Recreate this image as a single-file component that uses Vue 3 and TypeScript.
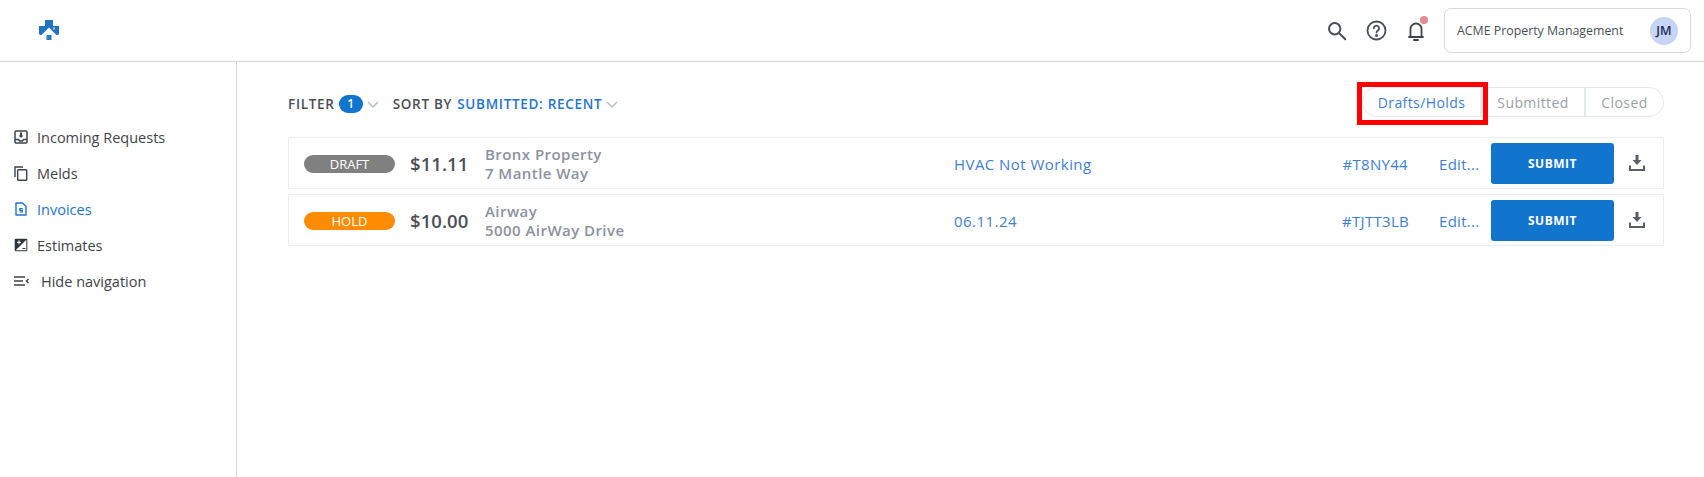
<script setup lang="ts">
interface Row { status: string; cls: string; price: string; name: string; addr: string; title: string; code: string }
const rows: Row[] = [
  { status: 'DRAFT', cls: 'draft', price: '$11.11', name: 'Bronx Property', addr: '7 Mantle Way', title: 'HVAC Not Working', code: '#T8NY44' },
  { status: 'HOLD', cls: 'hold', price: '$10.00', name: 'Airway', addr: '5000 AirWay Drive', title: '06.11.24', code: '#TJTT3LB' },
]
</script>

<template>
  <div class="page">
    <header class="top">
      <svg class="logo" width="20" height="20" viewBox="0 0 20 20">
        <path fill="#1f75c4" d="M6 0h8v6h6v8l-1 1h-1.500L10 7.500 2.500 15H1l-1-1V6h6z" />
        <rect x="7.500" y="15" width="5" height="5" fill="#2a7cc8" />
        <rect x="14" y="7.500" width="2" height="2" fill="#a9cbe9" />
      </svg>
      <div class="top-right">
        <svg class="ic search" width="20" height="20" viewBox="0 0 20 20" fill="none" stroke="#4a4f57" stroke-width="2">
          <circle cx="7.700" cy="7.700" r="5.700" /><path d="M12 12l6.300 6.300" stroke-linecap="round" />
        </svg>
        <svg class="ic help" width="21" height="21" viewBox="0 0 21 21" fill="none" stroke="#4a4f57" stroke-width="1.800">
          <circle cx="10.500" cy="10.500" r="9" />
          <path d="M7.900 8.300a2.600 2.600 0 1 1 4 2.200c-.9.600-1.400 1-1.400 2.100" stroke-linecap="round" />
          <circle cx="10.500" cy="15.400" r=".6" fill="#4a4f57" />
        </svg>
        <div class="bell">
          <svg width="18" height="22" viewBox="0 0 18 22" fill="none" stroke="#3f444c" stroke-width="1.800">
            <path d="M3.500 16V9a5.500 5.500 0 0 1 11 0v7l1.500 1H2z" stroke-linejoin="round" />
            <path d="M7 20h4" stroke-width="2" stroke-linecap="round" />
          </svg>
          <span class="dot"></span>
        </div>
        <div class="account">
          <span class="acct-name">ACME Property Management</span>
          <span class="avatar">JM</span>
        </div>
      </div>
    </header>
    <div class="body">
      <nav class="side">
        <a class="nav-item">
          <svg width="14" height="14" viewBox="0 0 14 14" fill="none" stroke="#3f444c" stroke-width="1.500">
            <rect x="1" y="1" width="12" height="12" rx="1" />
            <path d="M1 9.500h3.500l1 1.500h3l1-1.500H13" />
            <path d="M7 2.500V7" stroke-width="2" />
            <path d="M4.500 5.500h5L7 8z" fill="#3f444c" stroke="none" />
          </svg>
          <span>Incoming Requests</span>
        </a>
        <a class="nav-item">
          <svg width="14" height="15" viewBox="0 0 14 15" fill="none" stroke="#3f444c" stroke-width="1.400">
            <path d="M1 11V1h8" />
            <rect x="3.700" y="3.700" width="9" height="10.600" rx=".8" />
          </svg>
          <span>Melds</span>
        </a>
        <a class="nav-item active">
          <svg width="12" height="14" viewBox="0 0 12 14" fill="none" stroke="#1f75cf" stroke-width="1.400">
            <path d="M1 1h6.500L11 4.500V13H1z" stroke-linejoin="round" />
            <path d="M7.700 6.600H4.800v1.700h2.600V10H4.400" stroke-width="1.200" />
          </svg>
          <span>Invoices</span>
        </a>
        <a class="nav-item">
          <svg width="14" height="14" viewBox="0 0 14 14">
            <rect x=".7" y=".7" width="12.600" height="12.600" rx="1" fill="#2f343b" />
            <path d="M12.300 1.700v10.600H1.700z" fill="#fff" />
            <path d="M3 4.300h4M5 2.300v4" stroke="#fff" stroke-width="1" />
            <path d="M8.500 10.500h3" stroke="#2f343b" stroke-width="1" />
          </svg>
          <span>Estimates</span>
        </a>
        <a class="nav-item hide">
          <svg width="15" height="10" viewBox="0 0 15 10" fill="none" stroke="#3f444c" stroke-width="1.500">
            <path d="M0 1h11M0 5h9M0 9h11" />
            <path d="M14.500 3L12.500 5l2 2" />
          </svg>
          <span>Hide navigation</span>
        </a>
      </nav>
      <main class="main">
        <div class="toolbar">
          <div class="sorts">
            <span class="lbl">FILTER</span>
            <span class="pill">1</span>
            <svg class="chev" width="12" height="7" viewBox="0 0 12 7" fill="none" stroke="#b4bac6" stroke-width="1.400"><path d="M1 1l5 5 5-5" /></svg>
            <span class="lbl sort">SORT BY</span>
            <span class="lbl link">SUBMITTED: RECENT</span>
            <svg class="chev" width="12" height="7" viewBox="0 0 12 7" fill="none" stroke="#b4bac6" stroke-width="1.400"><path d="M1 1l5 5 5-5" /></svg>
          </div>
          <div class="tabs">
            <span class="tab t1 on">Drafts/Holds</span>
            <span class="tab t2">Submitted</span>
            <span class="tab t3">Closed</span>
            <span class="redbox"></span>
          </div>
        </div>
        <div class="rows">
          <div v-for="r in rows" :key="r.code" class="row">
            <span class="badge" :class="r.cls">{{ r.status }}</span>
            <span class="price">{{ r.price }}</span>
            <div class="prop"><div>{{ r.name }}</div><div>{{ r.addr }}</div></div>
            <a class="title">{{ r.title }}</a>
            <a class="code">{{ r.code }}</a>
            <a class="edit">Edit...</a>
            <button class="submit">SUBMIT</button>
            <svg class="dl" width="16" height="16" viewBox="0 0 16 16">
              <path fill="#5a5f6b" d="M6.500 0h3v5h3L8 10 3.500 5h3z" />
              <path fill="none" stroke="#5a5f6b" stroke-width="2" d="M1 10.500V15h14v-4.500" />
            </svg>
          </div>
        </div>
      </main>
    </div>
  </div>
</template>

<style>
html, body { margin: 0; background: #fff; }
</style>

<style scoped>
.page { height: 477px; overflow: hidden; font-family: "Open Sans", "Noto Sans", sans-serif; color: #3f444c; display: flex; flex-direction: column; }
.top { height: 61px; box-sizing: content-box; border-bottom: 1px solid #d3d6db; display: flex; align-items: center; justify-content: space-between; padding: 0 13px 0 39px; }
.logo { margin-top: -1px; }
.top-right { display: flex; align-items: center; }
.ic.search { margin-right: 20px; margin-left: -1px; }
.ic.help { margin-right: 20px; margin-left: -1px; }
.bell { position: relative; width: 18px; height: 22px; margin-right: 19px; }
.dot { position: absolute; top: -4px; right: -3px; width: 8px; height: 8px; border-radius: 50%; background: #e58a8a; }
.account { width: 247px; height: 45px; box-sizing: border-box; border: 1px solid #d5d9e3; border-radius: 7px; display: flex; align-items: center; justify-content: space-between; padding: 0 12px 0 12px; }
.acct-name { font-size: 12.350px; color: #4a4f57; }
.avatar { width: 28px; height: 28px; border-radius: 50%; background: #c5d5f3; color: #1e2a5a; font-size: 12.500px; font-weight: 600; display: flex; align-items: center; justify-content: center; }
.body { flex: 1; display: flex; }
.side { width: 236px; box-sizing: content-box; border-right: 1px solid #d3d6db; padding-top: 57px; display: flex; flex-direction: column; }
.nav-item { height: 36px; display: flex; align-items: center; padding-left: 14px; font-size: 14.500px; color: #3f444c; }
.nav-item svg { width: 14px; margin-right: 9px; flex: none; }
.nav-item.active { color: #1f75cf; }
.nav-item.hide svg { width: 15px; margin-right: 12px; }
.main { flex: 1; padding: 25px 40px 0 51px; }
.toolbar { height: 30px; display: flex; align-items: center; justify-content: space-between; margin-bottom: 20px; }
.sorts { display: flex; align-items: center; margin-top: 3px; }
.lbl { font-size: 13.500px; font-weight: 600; letter-spacing: .7px; color: #4a4f57; }
.link { color: #1f75cf; margin-left: 5px; }
.sort { margin-left: 14px; }
.pill { width: 24px; height: 18px; margin-left: 4px; border-radius: 9px; background: #1174cd; color: #fff; font-size: 12px; font-weight: 600; display: flex; align-items: center; justify-content: center; }
.chev { margin-left: 4px; margin-top: 1px; }
.tabs { position: relative; display: flex; height: 30px; box-sizing: border-box; border: 1px solid #e6e8f0; border-radius: 15px; font-size: 14px; letter-spacing: .4px; }
.tab { display: flex; align-items: center; justify-content: center; color: #9a9fa8; box-sizing: border-box; }
.t1 { width: 119px; border-right: 2px solid #e6e8f0; }
.t2 { width: 104px; border-right: 2px solid #e6e8f0; }
.t3 { width: 77px; }
.on { color: #3f7fd0; }
.redbox { position: absolute; left: -6px; top: -6px; width: 131px; height: 43px; box-sizing: border-box; border: 5px solid #f00; }
.rows { display: flex; flex-direction: column; gap: 5px; }
.row { height: 52px; box-sizing: border-box; border: 1px solid #eceef2; display: flex; align-items: center; padding: 1px 0 0 15px; }
.badge { width: 91px; height: 18px; flex: none; border-radius: 9px; color: #fff; font-size: 13px; display: flex; align-items: center; justify-content: center; }
.draft { background: #808080; }
.hold { background: #ff8c00; }
.price { width: 75px; margin-left: 15px; flex: none; font-size: 18.500px; font-weight: 600; letter-spacing: .05px; color: #4a4f57; }
.prop { width: 469px; flex: none; font-size: 15px; font-weight: 600; letter-spacing: .45px; line-height: 19.500px; color: #8b92a0; padding-top: 1px; }
.title { width: 388px; flex: none; font-size: 15px; letter-spacing: .45px; color: #3f7fd0; }
.code { width: 66px; flex: none; text-align: right; font-size: 15px; letter-spacing: .3px; color: #3f7fd0; white-space: nowrap; }
.edit { margin-left: 31px; width: 52px; flex: none; font-size: 15px; letter-spacing: .3px; color: #3f7fd0; }
.submit { width: 123px; height: 41px; flex: none; border: 0; border-radius: 3px; background: #1174cd; color: #fff; font: 700 12px "Open Sans", sans-serif; letter-spacing: .5px; padding: 0; margin-top: -1px; }
.dl { margin-left: 15px; flex: none; margin-top: -1px; }
</style>
